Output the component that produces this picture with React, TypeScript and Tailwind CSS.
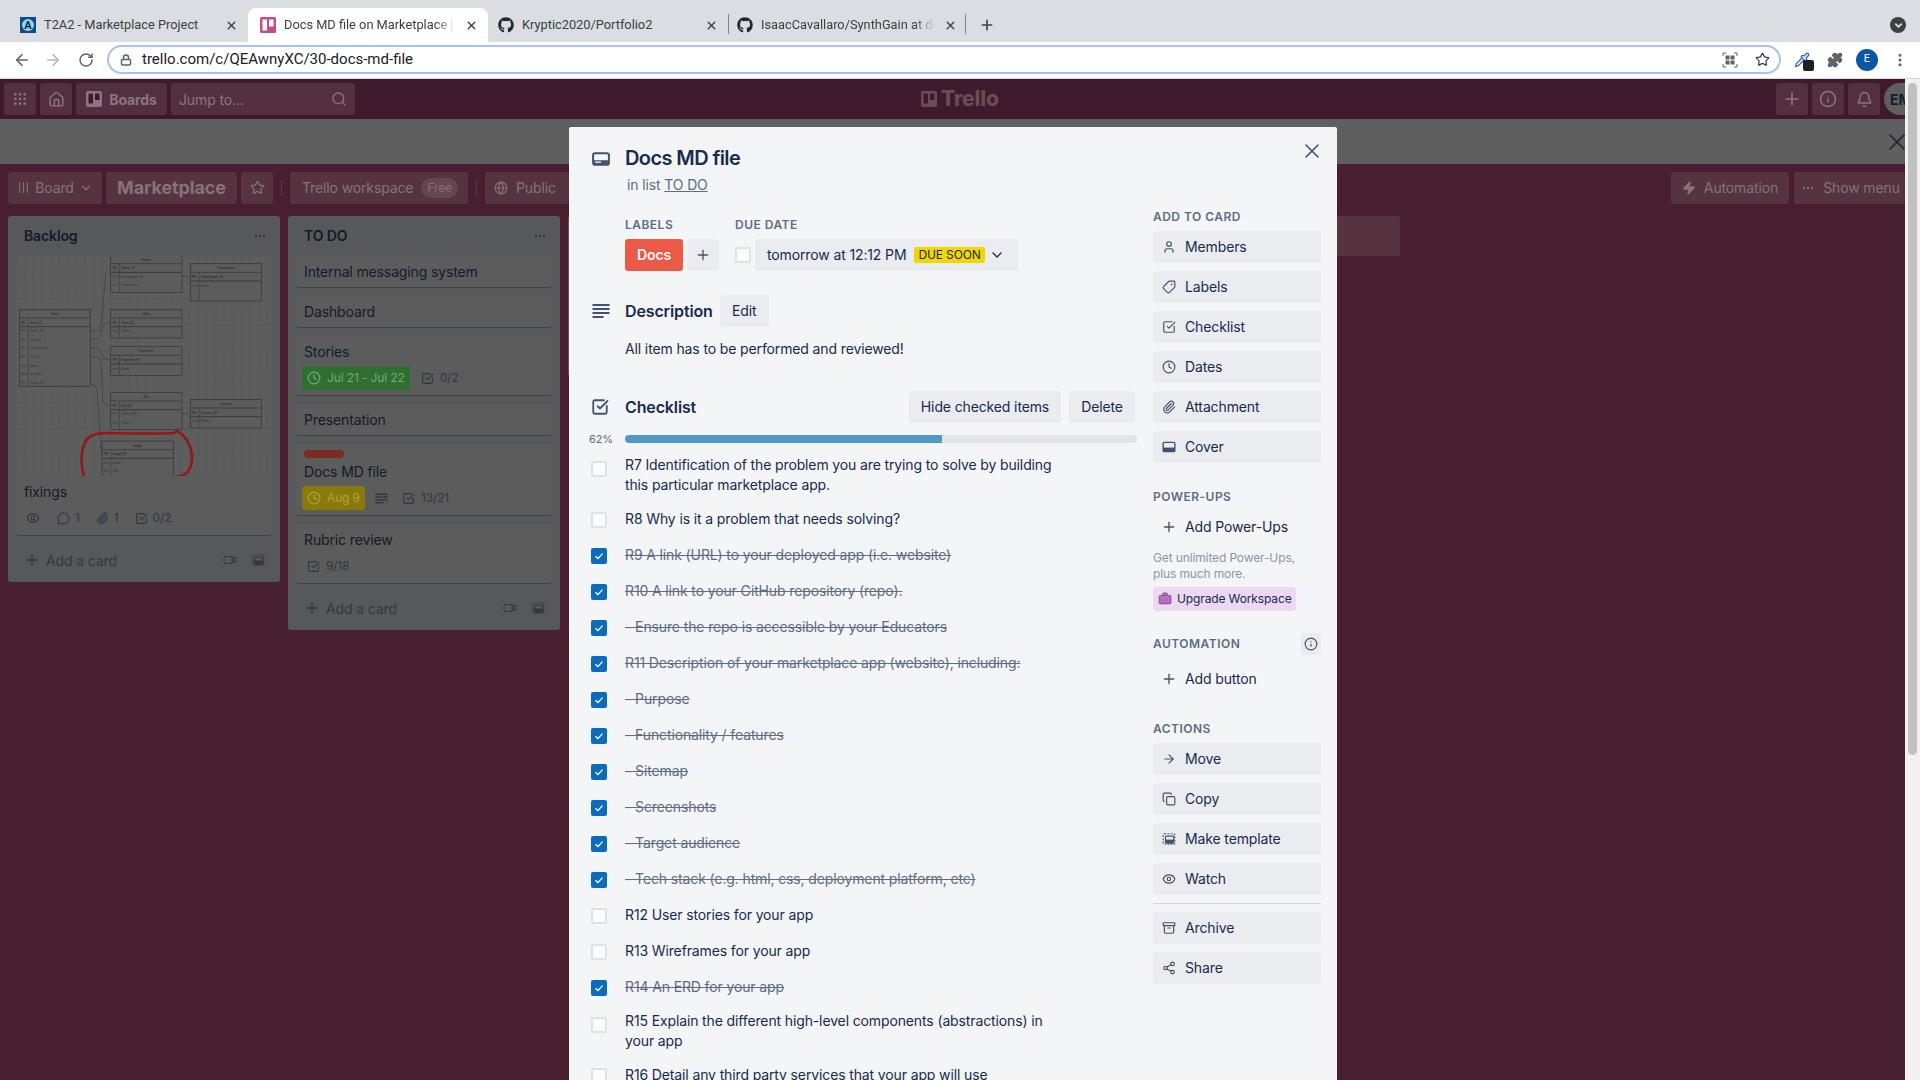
import React from "react";
import {
  AlignJustify, Archive, ArrowLeft, ArrowRight, Bell, Briefcase, CheckSquare, ChevronDown, Clock, Copy, EllipsisVertical,
  Eye, Globe, Grip, Home, Info, Lock, MessageCircle, MoreHorizontal, Paperclip, Pipette, Plus, Puzzle, RotateCw, Search, Share2, Star, Tag, User, Video, X, Zap,
} from "lucide-react";
import { FaGithub } from "react-icons/fa";

const CardIcon = ({ size = 20, color = "#42526e" }: { size?: number; color?: string }) => (
  <svg width={size} height={size} viewBox="0 0 24 24" fill="none">
    <rect x="2.5" y="5" width="19" height="14" rx="2.5" stroke={color} strokeWidth="2.4" />
    <rect x="2.5" y="13.5" width="19" height="5.5" fill={color} />
    <rect x="5" y="15" width="7" height="1.6" fill="#f4f5f7" />
  </svg>
);

const CoverIcon = () => (
  <svg width="14" height="14" viewBox="0 0 24 24" fill="none">
    <rect x="2" y="4" width="20" height="16" rx="2" stroke="#42526e" strokeWidth="2.4" />
    <rect x="2" y="13" width="20" height="7" fill="#42526e" />
  </svg>
);

const TemplateIcon = ({ color = "#42526e", size = 14 }: { color?: string; size?: number }) => (
  <svg width={size} height={size} viewBox="0 0 24 24" fill="none">
    <rect x="2" y="3" width="20" height="18" rx="2" stroke={color} strokeWidth="2" strokeDasharray="3 2.4" />
    <rect x="6" y="7" width="14" height="12" rx="1.5" stroke={color} strokeWidth="2" />
    <rect x="6" y="13" width="14" height="6" fill={color} />
  </svg>
);

const LinesIcon = ({ size, color, stroke = 2 }: { size: number; color: string; stroke?: number }) => (
  <svg width={size} height={size} viewBox="0 0 18 18" fill="none" stroke={color} strokeWidth={stroke}>
    <path d="M0.5 3h17M0.5 7h17M0.5 11h17M0.5 15h11" />
  </svg>
);

const QrIcon = () => (
  <svg width="16" height="16" viewBox="0 0 16 16" fill="none">
    <path d="M1 4V1h3M12 1h3v3M15 12v3h-3M4 15H1v-3" stroke="#5f6368" strokeWidth="1" />
    <rect x="3.5" y="3.5" width="4" height="4" fill="#5f6368" />
    <rect x="8.5" y="3.5" width="4" height="4" fill="#5f6368" />
    <rect x="3.5" y="8.5" width="4" height="4" fill="#5f6368" />
    <rect x="8.5" y="8.5" width="4" height="4" fill="#5f6368" />
  </svg>
);

const TrelloGlyph = ({ color, size }: { color: string; size: number }) => (
  <svg width={size} height={size} viewBox="0 0 16 16">
    <rect width="16" height="16" rx="2" fill={color} />
    <rect x="2.5" y="2.5" width="4.5" height="10" rx="0.6" fill="#3f1a2c" />
    <rect x="9" y="2.5" width="4.5" height="6.5" rx="0.6" fill="#3f1a2c" />
  </svg>
);

function Tab({ icon, title, active, fade, pad = "pl-3", tw = "w-[172px]", w = "w-[240px]" }: { icon: React.ReactNode; title: string; active?: boolean; fade?: boolean; pad?: string; tw?: string; w?: string }) {
  return (
    <div className={`relative flex h-[34px] ${w} shrink-0 items-center rounded-t-lg ${pad} ${active ? "bg-white" : ""}`}>
      <span className="flex w-4 justify-center">{icon}</span>
      <span className={`ml-2 ${tw} overflow-hidden whitespace-nowrap text-[12.8px] text-[#3c4043] ${fade ? "[mask-image:linear-gradient(to_right,black_88%,transparent)]" : ""}`}>{title}</span>
      <X size={13} strokeWidth={2.6} className="ml-[9px] text-[#3c4043]" />
    </div>
  );
}

function ChromeBar() {
  return (
    <div className="font-['Roboto',sans-serif]">
      <div className="flex h-[42px] items-end bg-[#dadde1] pl-2">
        <Tab title="T2A2 - Marketplace Project" icon={
          <svg width="16" height="16" viewBox="0 0 16 16">
            <rect width="16" height="16" fill="#0f4c81" />
            <circle cx="8" cy="8" r="6" fill="#8fd3ee" />
            <text x="8" y="12" textAnchor="middle" fontSize="11" fontWeight="700" fill="#0b2a4a" fontFamily="Roboto">A</text>
          </svg>
        } />
        <Tab active fade title="Docs MD file on Marketplace | Trello" icon={
          <svg width="16" height="16" viewBox="0 0 16 16">
            <rect width="16" height="16" rx="1.5" fill="#cb4a87" />
            <rect x="2.5" y="2.5" width="4.5" height="11" fill="#fff" />
            <rect x="9" y="2.5" width="4.5" height="7" fill="#fff" />
          </svg>
        } />
        <Tab pad="pl-[10px]" tw="w-[174px]" title="Kryptic2020/Portfolio2" icon={<FaGithub size={16} className="text-[#24292e]" />} />
        <div className="mb-[8px] h-[20px] w-px bg-[#80868b]" />
        <Tab pad="pl-[8px]" tw="w-[174px]" w="w-[236px]" fade title="IsaacCavallaro/SynthGain at docs" icon={<FaGithub size={16} className="text-[#24292e]" />} />
        <div className="mb-[8px] h-[20px] w-px bg-[#80868b]" />
        <Plus size={16} strokeWidth={2.4} className="mb-[9px] ml-[13px] text-[#3c4043]" />
        <div className="mb-[9px] ml-auto mr-[14px] flex h-4 w-4 items-center justify-center rounded-full bg-[#3c4043]">
          <ChevronDown size={11} strokeWidth={4} className="text-[#dadde1]" />
        </div>
      </div>
      <div className="flex h-[37px] items-center border-b border-[#d5d7da] bg-white pb-[1px]">
        <ArrowLeft size={18} strokeWidth={2.2} className="ml-[13px] text-[#5f6368]" />
        <ArrowRight size={18} strokeWidth={2.2} className="ml-[13px] text-[#b4b6b9]" />
        <RotateCw size={16} strokeWidth={2.2} className="ml-[16px] text-[#5f6368]" />
        <div className="ml-[13px] flex h-[29px] w-[1674px] items-center rounded-full border-2 border-[#a3c3f5] pl-[11px] pr-[9px]">
          <Lock size={12} strokeWidth={3} className="text-[#5f6368]" />
          <span className="ml-[10px] text-[15px] text-[#202124]">trello.com/c/QEAwnyXC/30-docs-md-file</span>
          <span className="ml-auto"><QrIcon /></span>
          <Star size={15} strokeWidth={2} className="ml-[17px] text-[#3c4043]" />
        </div>
        <div className="relative ml-[13px] flex w-4 justify-center">
          <Pipette size={16} className="text-[#2f6fb0]" />
          <span className="absolute left-[9px] top-[8px] h-[11px] w-[11px] rounded-[2px] bg-[#202124]" />
        </div>
        <Puzzle size={16} fill="#5f6368" className="ml-[17px] text-[#5f6368]" />
        <div className="ml-[13px] flex h-[22px] w-[22px] items-center justify-center rounded-full bg-[#0b57a4] text-[11px] text-white">E</div>
        <EllipsisVertical size={16} strokeWidth={2.6} className="ml-[14px] text-[#5f6368]" />
      </div>
    </div>
  );
}

const hb = "flex h-8 items-center rounded-[3px] bg-[#54303f] text-[#8a7580]";

function TrelloHeader() {
  return (
    <div className="relative flex h-10 shrink-0 items-center gap-1 bg-[#3f1a2c] pl-1">
      <div className={`${hb} w-8 justify-center`}><Grip size={16} /></div>
      <div className={`${hb} w-8 justify-center`}><Home size={17} /></div>
      <div className={`${hb} w-[91px] justify-center gap-[7px] text-[14px] font-bold`}><TrelloGlyph color="#8a7580" size={16} /><span>Boards</span></div>
      <div className={`${hb} w-[184px] justify-between px-2 text-[14px] font-normal`}><span>Jump to...</span><Search size={16} /></div>
      <div className="absolute left-[921px] top-[10px] flex items-center gap-1 text-[21px] font-extrabold leading-5 text-[#6a4c59]">
        <TrelloGlyph color="#6a4c59" size={16} /><span>Trello</span>
      </div>
      <div className="ml-auto flex items-center gap-1">
        <div className={`${hb} w-8 justify-center`}><Plus size={20} /></div>
        <div className={`${hb} w-8 justify-center`}><Info size={18} /></div>
        <div className={`${hb} w-8 justify-center`}><Bell size={17} /></div>
        <div className="flex h-8 w-[21px] items-center overflow-hidden rounded-l-full bg-[#5f5f62] pl-[6px] text-[14px] font-bold text-[#141c2b]">EM</div>
      </div>
    </div>
  );
}

const bb = "flex h-8 items-center rounded-[3px] bg-[#57323f] pb-px text-[14px] text-[#85727a]";

function BoardBar() {
  return (
    <div className="flex h-[52px] shrink-0 items-start pl-2 pt-2">
      <div className={`${bb} w-[94px] justify-center gap-[5px]`}><AlignJustify size={13} className="rotate-90" /><span>Board</span><ChevronDown size={14} /></div>
      <div className={`${bb} ml-1 w-[131px] justify-center text-[18px] font-bold`}>Marketplace</div>
      <div className={`${bb} ml-1 w-8 justify-center`}><Star size={15} /></div>
      <div className="mx-2 mt-2 h-4 w-px bg-[#5b3a48]" />
      <div className={`${bb} w-[178px] gap-2 pl-3`}>
        <span>Trello workspace</span><span className="rounded-full bg-[#66454f] px-[6px] text-[12px] leading-5">Free</span>
      </div>
      <div className="mx-2 mt-2 h-4 w-px bg-[#5b3a48]" />
      <div className={`${bb} w-[90px] gap-2 pl-[9px]`}><Globe size={14} /><span>Public</span></div>
      <div className={`${bb} ml-auto w-[118px] justify-center gap-2`}><Zap size={14} fill="#85727a" /><span>Automation</span></div>
      <div className={`${bb} ml-[5px] w-[111px] justify-center gap-2 pl-[2px]`}><MoreHorizontal size={14} /><span>Show menu</span></div>
    </div>
  );
}

function ErTable({ x, y, h, title, rows }: { x: number; y: number; h: number; title: string; rows: [string, string][] }) {
  const w = 214;
  return (
    <g fontFamily="Inter" fontSize="9" fill="#333">
      <rect x={x} y={y} width={w} height={h} fill="#5c5c5c" stroke="#333" strokeWidth="2" />
      <line x1={x} x2={x + w} y1={y + 26} y2={y + 26} stroke="#333" strokeWidth="2" />
      <line x1={x} x2={x + w} y1={y + 52} y2={y + 52} stroke="#333" strokeWidth="2.5" />
      <line x1={x + 26} x2={x + 26} y1={y + 26} y2={y + h} stroke="#333" strokeWidth="1.5" />
      <text x={x + w / 2} y={y + 17} textAnchor="middle" fontWeight="700">{title}</text>
      {rows.map((r, i) => (
        <g key={r[1]}>
          <text x={x + 6} y={y + 43 + i * 25.7} fontWeight={i === 0 ? 700 : 400}>{r[0]}</text>
          <text x={x + 32} y={y + 43 + i * 25.7} fontWeight={i === 0 ? 700 : 400}>{r[1]}</text>
        </g>
      ))}
    </g>
  );
}

function Diagram() {
  return (
    <svg viewBox="18 18 768 660" width="256" height="220" className="block">
      <rect x="18" y="18" width="768" height="660" fill="#5e5e5e" />
      <g stroke="#585858" strokeWidth="1">
        {Array.from({ length: 30 }, (_, i) => <line key={i} x1={18 + i * 26} x2={18 + i * 26} y1="18" y2="678" />)}
        {Array.from({ length: 26 }, (_, i) => <line key={i} x1="18" x2="786" y1={18 + i * 26} y2={18 + i * 26} />)}
      </g>
      <g fill="none" stroke="#3c3c3c" strokeWidth="2">
        <path d="M242 243h18c8 0 10-4 12-14l16-160c1-10 4-14 14-14" />
        <path d="M242 268h16c12 0 12-6 14-20l6-14c2-14 8-16 24-16" />
        <path d="M242 294h16c12 0 14 6 16 18 2 12 8 16 28 16" />
        <path d="M242 320h16c12 0 14 6 16 40l4 80c2 20 6 26 24 26" />
        <path d="M516 80h25M516 491h25" />
        <path d="M242 402c14 0 18 10 20 30l12 170c1 8 1 10 2 10" />
      </g>
      <ErTable x={302} y={15} h={112} title="Power" rows={[["PK", "Power_ID"], ["FK", "Superpower_ID"], ["int", "PowerLevel"]]} />
      <ErTable x={541} y={41} h={112} title="Superpower" rows={[["PK", "Superpower_ID"], ["text", "Name"]]} />
      <ErTable x={28} y={178} h={231} title="Hero" rows={[["PK", "Hero_ID"], ["FK", "Power_ID"], ["FK", "Alias_ID"], ["FK", "Franchise_ID"], ["FK", "City_ID"], ["text", "Name"], ["date", "Birthday"], ["FK", "Image_ID"]]} />
      <ErTable x={302} y={178} h={86} title="Alias" rows={[["PK", "Alias_ID"], ["text", "Name"]]} />
      <ErTable x={302} y={290} h={86} title="Franchise" rows={[["PK", "Franchise_ID"], ["text", "Name"]]} />
      <ErTable x={302} y={427} h={111} title="City" rows={[["PK", "City_ID"], ["FK", "Country_ID"], ["text", "Name"]]} />
      <ErTable x={541} y={448} h={86} title="Country" rows={[["PK", "Country_ID"], ["text", "Name"]]} />
      <ErTable x={276} y={573} h={112} title="Image" rows={[["PK", "Image_ID"], ["text", "Name"], ["text", "URL"]]} />
      <path d="M222 678C212 650 212 610 222 585c8-24 24-36 70-36 70 2 140 4 200 0l8-6c24 8 44 44 46 76 1 32-10 54-38 60h-8" fill="none" stroke="#8f1a1a" strokeWidth="8" />
    </svg>
  );
}

const meta = "text-[12px] text-[#30363f]";
const Card = ({ children, className = "h-8" }: { children: React.ReactNode; className?: string }) => (
  <div className={`mb-2 rounded-[3px] border-b border-[#3f4247] bg-[#5c5c5d] px-2 pt-[6px] text-[14px] leading-5 text-[#111a2b] ${className}`}>{children}</div>
);

function ListFoot() {
  return (
    <div className="flex h-[28px] items-center pl-4 pr-[15px] text-[14px] text-[#33383f]">
      <Plus size={16} /><span className="ml-[6px]">Add a card</span>
      <Video size={14} className="ml-auto" />
      <span className="ml-[14px]"><TemplateIcon color="#33383f" size={14} /></span>
    </div>
  );
}

const ListHead = ({ title }: { title: string }) => (
  <div className="flex h-10 items-center justify-between pb-px pl-4 pr-[13px] text-[14px] font-semibold text-[#111a2b]">
    <span>{title}</span><MoreHorizontal size={14} className="text-[#33383f]" />
  </div>
);

function Lists() {
  return (
    <div className="flex items-start gap-2 pl-2">
      <div className="w-[272px] rounded-[3px] bg-[#575859] pb-[8px]">
        <ListHead title="Backlog" />
        <div className="mx-2 mb-[10px] overflow-hidden rounded-[3px] border-b border-[#3f4247] bg-[#5c5c5d]">
          <Diagram />
          <div className="px-2 pt-[6px] text-[14px] leading-5 text-[#111a2b]">fixings</div>
          <div className={`${meta} flex h-[33px] items-start gap-4 px-[10px] pt-[6px]`}>
            <Eye size={14} className="mr-[1px] mt-[3px]" />
            <span className="flex items-center gap-[5px] leading-5"><MessageCircle size={13} />1</span>
            <span className="flex items-center gap-[5px] leading-5"><Paperclip size={13} />1</span>
            <span className="flex items-center gap-[5px] leading-5"><CheckSquare size={13} />0/2</span>
          </div>
        </div>
        <ListFoot />
      </div>
      <div className="w-[272px] rounded-[3px] bg-[#575859] pb-[8px]">
        <ListHead title="TO DO" />
        <div className="px-2">
          <Card>Internal messaging system</Card>
          <Card>Dashboard</Card>
          <Card className="h-[60px]">
            <div>Stories</div>
            <div className={`${meta} -ml-[2px] mt-[4px] flex items-center`}>
              <span className="flex h-6 items-center gap-[6px] rounded-[3px] bg-[#2f6f2f] px-[5px] text-[#79a878]"><Clock size={14} />Jul 21 - Jul 22</span>
              <span className="ml-[11px] flex items-center gap-[6px]"><CheckSquare size={13} />0/2</span>
            </div>
          </Card>
          <Card>Presentation</Card>
          <Card className="h-[72px]">
            <div className="h-2 w-10 rounded-full bg-[#7a2a20]" />
            <div className="mt-[4px]">Docs MD file</div>
            <div className={`${meta} -ml-[2px] mt-[4px] flex items-center`}>
              <span className="flex h-6 items-center gap-[6px] rounded-[3px] bg-[#8a7a0c] px-[5px] text-[#b0a43a]"><Clock size={14} />Aug 9</span>
              <span className="ml-[10px]"><LinesIcon size={13} color="#30363f" /></span>
              <span className="ml-[14px] flex items-center gap-[6px]"><CheckSquare size={13} />13/21</span>
            </div>
          </Card>
          <Card className="h-[60px]">
            <div>Rubric review</div>
            <div className={`${meta} mt-[4px] flex h-6 items-center gap-[6px] pl-[3px]`}><CheckSquare size={13} />9/18</div>
          </Card>
        </div>
        <div className="pt-[2px]"><ListFoot /></div>
      </div>
      <div className="h-40 w-[272px] rounded-[3px] bg-[#575859]" />
      <div className="h-40 w-[272px] rounded-[3px] bg-[#575859]" />
      <div className="h-10 w-[272px] rounded-[3px] bg-[#56333f]" />
    </div>
  );
}

const cardBtn = "flex h-8 items-center rounded-[3px] bg-[#eaecf0] pb-px text-[14px] text-[#172b4d]";
const sideHead = "text-[12px] font-semibold leading-4 tracking-[0.04em] text-[#5e6c84]";

function SideBtn({ icon, label, plain }: { icon: React.ReactNode; label: string; plain?: boolean }) {
  return (
    <div className={`mt-2 flex h-8 items-center rounded-[3px] pb-px text-[14px] text-[#172b4d] ${plain ? "" : "bg-[#eaecf0]"}`}>
      <span className="flex w-8 justify-center text-[#42526e]">{icon}</span>
      <span>{label}</span>
    </div>
  );
}

function Sidebar() {
  const s = 14;
  return (
    <div className="ml-4 mr-4 w-[168px] shrink-0 pt-[82px]">
      <div className={sideHead}>ADD TO CARD</div>
      <div className="-mt-[2px]">
        <SideBtn icon={<User size={s} />} label="Members" />
        <SideBtn icon={<Tag size={s} className="-scale-x-100" />} label="Labels" />
        <SideBtn icon={<CheckSquare size={s} />} label="Checklist" />
        <SideBtn icon={<Clock size={s} />} label="Dates" />
        <SideBtn icon={<Paperclip size={s} />} label="Attachment" />
        <SideBtn icon={<CoverIcon />} label="Cover" />
      </div>
      <div className={`${sideHead} mt-[26px]`}>POWER-UPS</div>
      <div className="-mt-[2px]"><SideBtn plain icon={<Plus size={16} />} label="Add Power-Ups" /></div>
      <div className="mt-[7px] text-[12px] leading-4 text-[#8b95a7]">Get unlimited Power-Ups,<br />plus much more.</div>
      <div className="mt-[5px] flex h-6 w-[143px] items-center gap-[5px] rounded-[3px] bg-[#ecd8f2] pl-[5px] text-[12px] text-[#172b4d]">
        <Briefcase size={14} fill="#b26fc0" className="text-[#8d5a9b]" />Upgrade Workspace
      </div>
      <div className="mt-[22px] flex h-[22px] items-center justify-between">
        <span className={sideHead}>AUTOMATION</span>
        <span className="flex h-[22px] w-5 items-center justify-center rounded-[3px] bg-[#eaecf0] text-[#42526e]"><Info size={14} /></span>
      </div>
      <div><SideBtn plain icon={<Plus size={16} />} label="Add button" /></div>
      <div className={`${sideHead} mt-[26px]`}>ACTIONS</div>
      <div className="-mt-[2px]">
        <SideBtn icon={<ArrowRight size={s} />} label="Move" />
        <SideBtn icon={<Copy size={s} />} label="Copy" />
        <SideBtn icon={<TemplateIcon />} label="Make template" />
        <SideBtn icon={<Eye size={s} />} label="Watch" />
      </div>
      <div className="mt-2 h-px bg-[#d5d8de]" />
      <div>
        <SideBtn icon={<Archive size={s} />} label="Archive" />
        <SideBtn icon={<Share2 size={s} />} label="Share" />
      </div>
    </div>
  );
}

const items: [string, boolean][] = [
  ["R7 Identification of the problem you are trying to solve by building this particular marketplace app.", false],
  ["R8 Why is it a problem that needs solving?", false],
  ["R9 A link (URL) to your deployed app (i.e. website)", true],
  ["R10 A link to your GitHub repository (repo).", true],
  ["- Ensure the repo is accessible by your Educators", true],
  ["R11 Description of your marketplace app (website), including:", true],
  ["- Purpose", true],
  ["- Functionality / features", true],
  ["- Sitemap", true],
  ["- Screenshots", true],
  ["- Target audience", true],
  ["- Tech stack (e.g. html, css, deployment platform, etc)", true],
  ["R12 User stories for your app", false],
  ["R13 Wireframes for your app", false],
  ["R14 An ERD for your app", true],
  ["R15 Explain the different high-level components (abstractions) in your app", false],
  ["R16 Detail any third party services that your app will use", false],
];

function Check({ on }: { on: boolean }) {
  return on ? (
    <span className="flex h-4 w-4 items-center justify-center rounded-[2px] bg-[#0b6bbd]">
      <svg width="10" height="10" viewBox="0 0 10 10" fill="none"><path d="M1.5 5.2 4 7.6l4.5-5" stroke="#fff" strokeWidth="1.4" /></svg>
    </span>
  ) : (
    <span className="block h-4 w-4 rounded-[2px] border-2 border-[#dfe1e6] bg-[#fafbfc]" />
  );
}

function Modal() {
  return (
    <div className="absolute left-[569px] top-[48px] flex h-[1000px] w-[768px] rounded-t-[2px] bg-[#f4f5f7] font-['Inter',sans-serif] tracking-[-0.008em]">
      <X size={24} strokeWidth={1.6} className="absolute right-[13px] top-[12px] text-[#42526e]" />
      <div className="w-[568px] shrink-0 pl-[56px]">
        <div className="relative pt-[17px] text-[20px] font-semibold leading-7 tracking-[-0.03em] text-[#172b4d]">
          <span className="absolute -left-[34px] top-[22px]"><CardIcon /></span>
          Docs MD file
        </div>
        <div className="ml-[2px] mt-[3px] text-[14px] leading-5 text-[#5e6c84]">in list <span className="underline">TO DO</span></div>

        <div className="mt-[22px] flex">
          <div className="w-[110px]">
            <div className={sideHead}>LABELS</div>
            <div className="mt-[6px] flex gap-1">
              <div className="flex h-8 w-[58px] items-center justify-center rounded-[3px] bg-[#eb5a46] pb-px text-[14px] font-semibold text-white">Docs</div>
              <div className={`${cardBtn} w-8 justify-center`}><Plus size={16} className="text-[#42526e]" /></div>
            </div>
          </div>
          <div>
            <div className={sideHead}>DUE DATE</div>
            <div className="mt-[6px] flex items-center">
              <Check on={false} />
              <div className={`${cardBtn} ml-1 w-[263px] pl-3`}>
                <span>tomorrow at 12:12 PM</span>
                <span className="ml-2 rounded-[2px] bg-[#f2d600] px-1 text-[12px] leading-4">DUE SOON</span>
                <ChevronDown size={16} className="ml-[4px] text-[#172b4d]" />
              </div>
            </div>
          </div>
        </div>

        <div className="relative mt-6 flex h-8 items-center">
          <span className="absolute -left-[33px] top-[7px]"><LinesIcon size={18} color="#42526e" /></span>
          <span className="pb-px text-[16px] font-semibold text-[#172b4d]">Description</span>
          <div className={`${cardBtn} ml-[7px] w-[49px] justify-center`}>Edit</div>
        </div>
        <div className="mt-3 text-[14px] leading-5 text-[#172b4d]">All item has to be performed and reviewed!</div>

        <div className="relative mt-8 flex h-8 w-[510px] items-center">
          <span className="absolute -left-[34px] top-[7px] text-[#42526e]"><CheckSquare size={18} strokeWidth={2.4} /></span>
          <span className="pb-px text-[16px] font-semibold text-[#172b4d]">Checklist</span>
          <div className={`${cardBtn} ml-auto w-[152px] justify-center`}>Hide checked items</div>
          <div className={`${cardBtn} ml-2 w-[66px] justify-center`}>Delete</div>
        </div>

        <div className="relative mt-2 flex h-4 w-[512px] items-center">
          <span className="absolute -left-[36px] text-[11px] text-[#5e6c84]">62%</span>
          <div className="h-2 w-full overflow-hidden rounded-full bg-[#e2e3e7]">
            <div className="h-full bg-[#5299c8]" style={{ width: "62%" }} />
          </div>
        </div>

        <div className="mt-[2px]">
          {items.map(([t, on]) => {
            const long = t.length > 70;
            return (
              <div key={t} className="relative">
                <span className={`absolute -left-[34px] ${long ? "top-[12px]" : "top-[11px]"}`}><Check on={on} /></span>
                <div className={`w-[445px] text-[14px] leading-5 ${long ? "py-[6px]" : "py-2"} ${on ? "text-[#5e6c84] line-through" : "text-[#172b4d]"}`}>{t}</div>
              </div>
            );
          })}
        </div>
      </div>
      <Sidebar />
    </div>
  );
}

export default function App() {
  return (
    <div className="flex h-screen w-full flex-col overflow-hidden bg-white">
      <ChromeBar />
      <div className="relative flex min-h-0 flex-1">
        <div className="min-w-0 flex-1 overflow-hidden bg-[#471f30] font-['Inter',sans-serif] tracking-[-0.008em]">
          <TrelloHeader />
          <div className="flex h-[45px] items-center justify-end bg-[#5f5f5f] text-[#20262f]">
            <X size={28} strokeWidth={1.5} className="-mr-[6px]" />
          </div>
          <BoardBar />
          <Lists />
        </div>
        <div className="w-[15px] shrink-0 bg-[#f1f1f1] px-[3px] pt-1">
          <div className="h-[672px] rounded-full bg-[#c1c1c1]" />
        </div>
        <Modal />
      </div>
    </div>
  );
}
